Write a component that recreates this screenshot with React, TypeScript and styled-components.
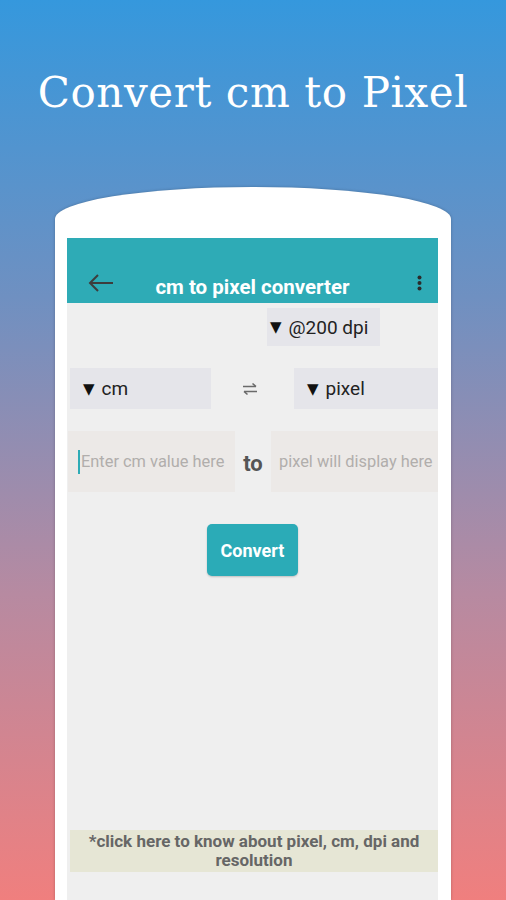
import React from "react";
import styled, { createGlobalStyle } from "styled-components";

const GlobalStyle = createGlobalStyle`
  html, body {
    margin: 0;
    padding: 0;
  }
  body {
    width: 506px;
    height: 900px;
    overflow: hidden;
    background: linear-gradient(180deg, #3598dd 0%, #6f90c1 33%, #b78aa1 66%, #f07f7e 100%);
    font-family: Roboto, "Noto Sans", sans-serif;
  }
`;

const Page = styled.div`
  width: 506px;
  height: 900px;
  display: flex;
  flex-direction: column;
  align-items: center;
`;

const Header = styled.div`
  height: 187px;
  box-sizing: border-box;
  padding-top: 65px;
  width: 100%;
  text-align: center;
`;

const Title = styled.h1`
  margin: 0;
  font-family: "DejaVu Serif", "Liberation Serif", serif;
  font-weight: normal;
  font-size: 42px;
  line-height: 56px;
  color: #ffffff;
  letter-spacing: 0.6px;
`;

const PhoneFrame = styled.div`
  width: 396px;
  flex: 1;
  box-sizing: border-box;
  padding: 51px 13px 0 12px;
  background: #ffffff;
  border-radius: 50% 50% 0 0 / 32px 32px 0 0;
  box-shadow: 0 0 3px rgba(0, 0, 0, 0.25);
  display: flex;
`;

const Screen = styled.div`
  flex: 1;
  display: flex;
  flex-direction: column;
  background: #efefef;
`;

const AppBar = styled.div`
  height: 65px;
  box-sizing: border-box;
  padding-top: 24px;
  background: #2eabb6;
  display: grid;
  grid-template-columns: 1fr auto 1fr;
  align-items: center;
`;

const BackButton = styled.div`
  display: flex;
  align-items: center;
  padding-left: 21px;
  height: 41px;
`;

const BarTitle = styled.div`
  color: #ffffff;
  font-weight: bold;
  font-size: 20.5px;
  padding-top: 8px;
`;

const MenuButton = styled.div`
  display: flex;
  justify-content: flex-end;
  padding-right: 16px;
  height: 41px;
  align-items: center;
`;

const Content = styled.div`
  flex: 1;
  display: flex;
  flex-direction: column;
`;

const DpiRow = styled.div`
  display: flex;
  justify-content: flex-end;
  padding: 5px 58px 0 0;
`;

const Dropdown = styled.div<{ $w: number; $h: number; $pad: number }>`
  width: ${(p) => p.$w}px;
  height: ${(p) => p.$h}px;
  box-sizing: border-box;
  padding-left: ${(p) => p.$pad}px;
  background: #e5e5ea;
  display: flex;
  align-items: center;
  gap: 7px;
  font-size: 19px;
  color: #222;
`;

const Caret = styled.span`
  font-family: "DejaVu Sans", sans-serif;
  font-size: 15px;
  color: #111;
`;

const UnitRow = styled.div`
  display: grid;
  grid-template-columns: 141px 1fr 144px;
  align-items: center;
  padding-left: 3px;
  margin-top: 22px;
`;

const SwapIcon = styled.div`
  display: flex;
  justify-content: center;
  padding-right: 6px;
`;

const FieldRow = styled.div`
  display: grid;
  grid-template-columns: 167px 1fr 167px;
  align-items: center;
  padding-left: 1px;
  margin-top: 22px;
`;

const Field = styled.div<{ $pad: number }>`
  height: 61px;
  box-sizing: border-box;
  padding-left: ${(p) => p.$pad}px;
  background: #ece9e7;
  display: flex;
  align-items: center;
  font-size: 16.4px;
  color: #b1aeac;
  white-space: nowrap;
  overflow: hidden;
`;

const CursorBar = styled.span`
  width: 2px;
  height: 24px;
  background: #2eabb6;
  margin-right: 1px;
`;

const ToLabel = styled.div`
  text-align: center;
  font-weight: bold;
  font-size: 22px;
  color: #555;
  padding-top: 3px;
`;

const ButtonRow = styled.div`
  display: flex;
  justify-content: center;
  margin-top: 32px;
`;

const ConvertButton = styled.button`
  width: 91px;
  height: 52px;
  border: none;
  border-radius: 5px;
  background: #2babb7;
  color: #ffffff;
  font-family: Roboto, sans-serif;
  font-weight: bold;
  font-size: 18px;
  box-shadow: 0 1px 2px rgba(0, 0, 0, 0.2);
`;

const InfoBanner = styled.div`
  margin: auto 0 28px 3px;
  height: 42px;
  background: #e6e6d5;
  display: flex;
  align-items: center;
  justify-content: center;
  text-align: center;
  font-weight: bold;
  font-size: 17px;
  line-height: 19px;
  color: #666;
`;

const BackArrow = () => (
  <svg width="26" height="18" viewBox="0 0 26 18">
    <path
      d="M25 9H2M10 1L2 9l8 8"
      fill="none"
      stroke="#3d3d3d"
      strokeWidth="2"
    />
  </svg>
);

const MoreDots = () => (
  <svg width="5" height="16" viewBox="0 0 5 16">
    <circle cx="2.5" cy="2.5" r="2" fill="#2b2b2b" />
    <circle cx="2.5" cy="8" r="2" fill="#2b2b2b" />
    <circle cx="2.5" cy="13.5" r="2" fill="#2b2b2b" />
  </svg>
);

const SwapArrows = () => (
  <svg width="16" height="14" viewBox="0 0 16 14">
    <path
      d="M1 4.5h13M10.5 1.5l3.5 3M15 9.5H2M5.5 12.5L2 9.5"
      fill="none"
      stroke="#6a6a6a"
      strokeWidth="1.6"
    />
  </svg>
);

export default function App() {
  return (
    <Page>
      <GlobalStyle />
      <Header>
        <Title>Convert cm to Pixel</Title>
      </Header>
      <PhoneFrame>
        <Screen>
          <AppBar>
            <BackButton>
              <BackArrow />
            </BackButton>
            <BarTitle>cm to pixel converter</BarTitle>
            <MenuButton>
              <MoreDots />
            </MenuButton>
          </AppBar>
          <Content>
            <DpiRow>
              <Dropdown $w={113} $h={38} $pad={3}>
                <Caret>▼</Caret>@200 dpi
              </Dropdown>
            </DpiRow>
            <UnitRow>
              <Dropdown $w={141} $h={41} $pad={13}>
                <Caret>▼</Caret>cm
              </Dropdown>
              <SwapIcon>
                <SwapArrows />
              </SwapIcon>
              <Dropdown $w={144} $h={41} $pad={13}>
                <Caret>▼</Caret>pixel
              </Dropdown>
            </UnitRow>
            <FieldRow>
              <Field $pad={10}>
                <CursorBar />
                Enter cm value here
              </Field>
              <ToLabel>to</ToLabel>
              <Field $pad={8}>pixel will display here</Field>
            </FieldRow>
            <ButtonRow>
              <ConvertButton>Convert</ConvertButton>
            </ButtonRow>
            <InfoBanner>
              *click here to know about pixel, cm, dpi and
              <br />
              resolution
            </InfoBanner>
          </Content>
        </Screen>
      </PhoneFrame>
    </Page>
  );
}
